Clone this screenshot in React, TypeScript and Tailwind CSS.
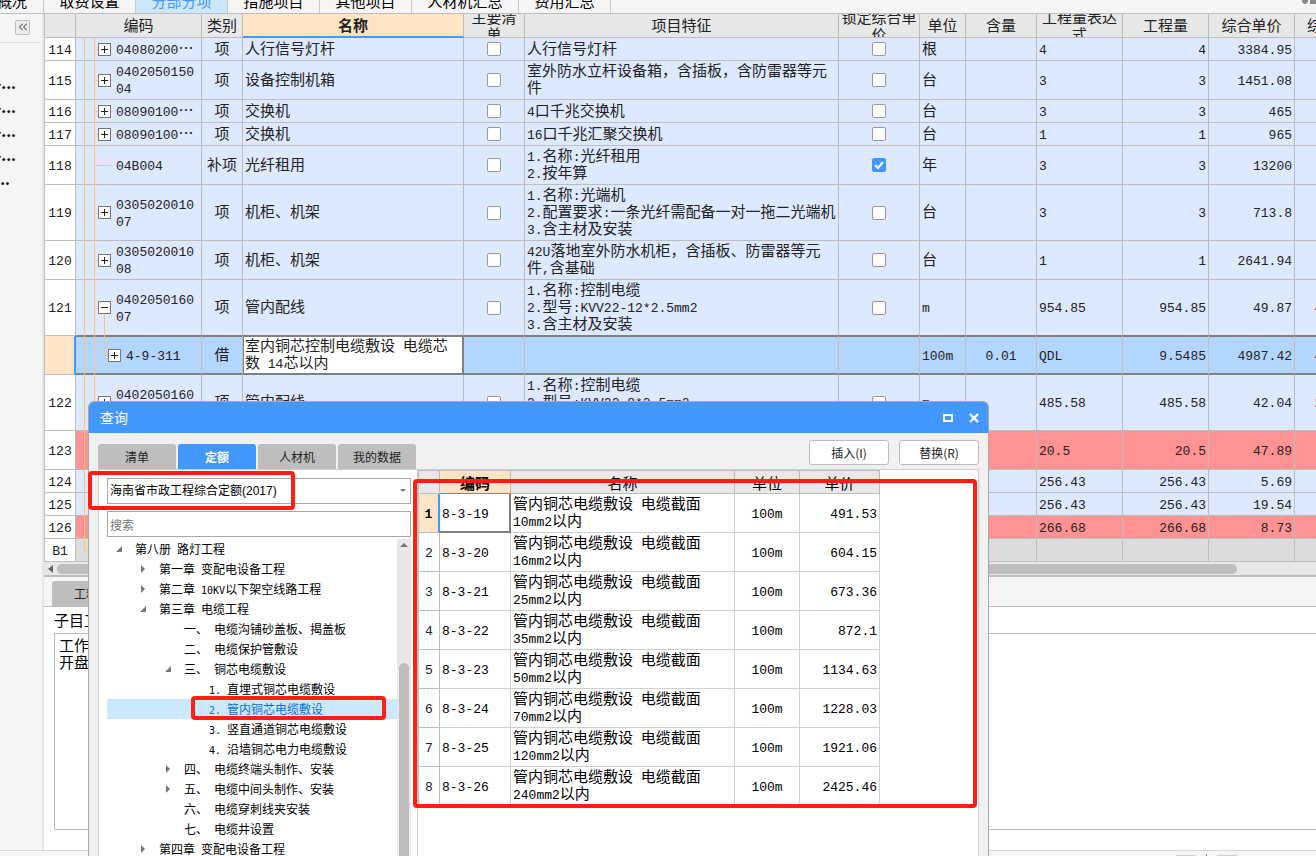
import { Fragment, type ReactNode } from 'react';
import clsx from 'clsx';
import { ChevronsLeft } from 'lucide-react';

type Tone = 'normal' | 'selected' | 'alert' | 'total';

interface Item {
  no: string;
  code?: string;
  tree?: 'plus' | 'minus' | 'leaf' | 'child' | 'trunk' | 'end';
  kind?: string;
  name?: string;
  feature?: string;
  main?: boolean;
  locked?: boolean;
  unit?: string;
  content?: string;
  expr?: string;
  amount?: string;
  price?: string;
  total?: string;
  lines: 1 | 2 | 3;
  tone?: Tone;
}

const items: Item[] = [
  { no: '114', code: '04080200…', tree: 'plus', kind: '项', name: '人行信号灯杆', feature: '人行信号灯杆', main: false, locked: false, unit: '根', expr: '4', amount: '4', price: '3384.95', lines: 1 },
  { no: '115', code: '0402050150\n04', tree: 'plus', kind: '项', name: '设备控制机箱', feature: '室外防水立杆设备箱，含插板，含防雷器等元\n件', main: false, locked: false, unit: '台', expr: '3', amount: '3', price: '1451.08', lines: 2 },
  { no: '116', code: '08090100…', tree: 'plus', kind: '项', name: '交换机', feature: '4口千兆交换机', main: false, locked: false, unit: '台', expr: '3', amount: '3', price: '465', lines: 1 },
  { no: '117', code: '08090100…', tree: 'plus', kind: '项', name: '交换机', feature: '16口千兆汇聚交换机', main: false, locked: false, unit: '台', expr: '1', amount: '1', price: '965', lines: 1 },
  { no: '118', code: '04B004', tree: 'leaf', kind: '补项', name: '光纤租用', feature: '1.名称:光纤租用\n2.按年算', main: false, locked: true, unit: '年', expr: '3', amount: '3', price: '13200', lines: 2 },
  { no: '119', code: '0305020010\n07', tree: 'plus', kind: '项', name: '机柜、机架', feature: '1.名称:光端机\n2.配置要求:一条光纤需配备一对一拖二光端机\n3.含主材及安装', main: false, locked: false, unit: '台', expr: '3', amount: '3', price: '713.8', lines: 3 },
  { no: '120', code: '0305020010\n08', tree: 'plus', kind: '项', name: '机柜、机架', feature: '42U落地室外防水机柜，含插板、防雷器等元\n件,含基础', main: false, locked: false, unit: '台', expr: '1', amount: '1', price: '2641.94', lines: 2 },
  { no: '121', code: '0402050160\n07', tree: 'minus', kind: '项', name: '管内配线', feature: '1.名称:控制电缆\n2.型号:KVV22-12*2.5mm2\n3.含主材及安装', main: false, locked: false, unit: 'm', expr: '954.85', amount: '954.85', price: '49.87', total: '47618.37', lines: 3 },
  { no: '', code: '4-9-311', tree: 'child', kind: '借', name: '室内铜芯控制电缆敷设 电缆芯\n数 14芯以内', unit: '100m', content: '0.01', expr: 'QDL', amount: '9.5485', price: '4987.42', total: '47622.38', lines: 2, tone: 'selected' },
  { no: '122', code: '0402050160\n08', tree: 'plus', kind: '项', name: '管内配线', feature: '1.名称:控制电缆\n2.型号:KVV22-8*2.5mm2\n3.含主材及安装', main: false, locked: false, unit: 'm', expr: '485.58', amount: '485.58', price: '42.04', total: '20413.78', lines: 3 },
  { no: '123', tree: 'trunk', expr: '20.5', amount: '20.5', price: '47.89', lines: 2, tone: 'alert' },
  { no: '124', tree: 'trunk', expr: '256.43', amount: '256.43', price: '5.69', lines: 1 },
  { no: '125', tree: 'trunk', expr: '256.43', amount: '256.43', price: '19.54', lines: 1 },
  { no: '126', tree: 'trunk', expr: '266.68', amount: '266.68', price: '8.73', lines: 1, tone: 'alert' },
  { no: 'B1', tree: 'end', lines: 1, tone: 'total' },
];

const quotas = [
  { code: '8-3-19', size: '10', price: '491.53' },
  { code: '8-3-20', size: '16', price: '604.15' },
  { code: '8-3-21', size: '25', price: '673.36' },
  { code: '8-3-22', size: '35', price: '872.1' },
  { code: '8-3-23', size: '50', price: '1134.63' },
  { code: '8-3-24', size: '70', price: '1228.03' },
  { code: '8-3-25', size: '120', price: '1921.06' },
  { code: '8-3-26', size: '240', price: '2425.46' },
];

interface Node {
  label: string;
  level: 0 | 1 | 2 | 3;
  state?: 'open' | 'closed';
  active?: boolean;
}

const nodes: Node[] = [
  { label: '第八册 路灯工程', level: 0, state: 'open' },
  { label: '第一章 变配电设备工程', level: 1, state: 'closed' },
  { label: '第二章 10KV以下架空线路工程', level: 1, state: 'closed' },
  { label: '第三章 电缆工程', level: 1, state: 'open' },
  { label: '一、 电缆沟铺砂盖板、揭盖板', level: 2 },
  { label: '二、 电缆保护管敷设', level: 2 },
  { label: '三、 铜芯电缆敷设', level: 2, state: 'open' },
  { label: '1. 直埋式铜芯电缆敷设', level: 3 },
  { label: '2. 管内铜芯电缆敷设', level: 3, active: true },
  { label: '3. 竖直通道铜芯电缆敷设', level: 3 },
  { label: '4. 沿墙铜芯电力电缆敷设', level: 3 },
  { label: '四、 电缆终端头制作、安装', level: 2, state: 'closed' },
  { label: '五、 电缆中间头制作、安装', level: 2, state: 'closed' },
  { label: '六、 电缆穿刺线夹安装', level: 2 },
  { label: '七、 电缆井设置', level: 2 },
  { label: '第四章 变配电设备工程', level: 1, state: 'closed' },
];

const indent = ['pl-2', 'pl-8', 'pl-[57px]', 'pl-[82px]'];

const rowHeight = { 1: 'h-[23px]', 2: 'h-[39px]', 3: 'h-[56px]' };

const toneBg: Record<Tone, string> = {
  normal: 'bg-[#dde9ff]',
  selected: 'bg-[#b3d6ff]',
  alert: 'bg-[#ff9292]',
  total: 'bg-[#dcdcdc]',
};

// Latin runs are set in a half-width mono face next to full-width hanzi.
// Their short line height keeps them from growing the line box.
function Mixed({ text, small }: { text?: string; small?: boolean }) {
  if (!text) return null;
  return (
    <>
      {text.split(/([\x20-\x7e]+)/).map((part, i) =>
        i % 2 === 1 ? (
          <span
            key={i}
            className={clsx(
              'leading-[10px] whitespace-pre',
              small ? "font-['DejaVu_Sans_Mono',monospace] text-[10px]" : "font-['Liberation_Mono',monospace] text-[13px]",
            )}
          >
            {part}
          </span>
        ) : (
          <Fragment key={i}>{part}</Fragment>
        ),
      )}
    </>
  );
}

function TreeMark({ tree }: { tree: NonNullable<Item['tree']> }) {
  const line = 'absolute bg-[#ffc56e]';
  const inner = tree !== 'trunk' && tree !== 'end';
  return (
    <>
      <span className={clsx(line, 'left-2 top-0 w-px', tree === 'end' ? 'h-1/2' : '-bottom-px')} />
      {tree === 'end' && <span className={clsx(line, 'left-2 top-1/2 h-px w-4')} />}
      {inner && <span className={clsx(line, 'left-[18px] top-0 -bottom-px w-px')} />}
      {inner && tree !== 'child' && (
        <span className={clsx(line, 'left-[18px] top-1/2 h-px', tree === 'leaf' ? 'w-[17px]' : 'w-1')} />
      )}
      {tree === 'minus' && <span className={clsx(line, 'left-7 top-1/2 -bottom-px w-px')} />}
      {tree === 'child' && <span className={clsx(line, 'left-7 top-0 h-1/2 w-px')} />}
      {tree === 'child' && <span className={clsx(line, 'left-7 top-1/2 h-px w-1')} />}
    </>
  );
}

function Toggle({ open }: { open: boolean }) {
  return (
    <button type="button" aria-label={open ? '折叠' : '展开'} className="relative block size-[13px] shrink-0 border border-[#777] bg-white">
      <svg viewBox="0 0 11 11" className="block size-[11px]" shapeRendering="crispEdges">
        <path d={open ? 'M2 5h7v1h-7z' : 'M2 5h7v1h-7z M5 2h1v7h-1z'} fill="#222" />
      </svg>
    </button>
  );
}

function CheckBox({ label, checked }: { label: string; checked: boolean }) {
  return (
    <label className="relative mx-auto block size-[14px]">
      <input
        type="checkbox"
        aria-label={label}
        defaultChecked={checked}
        className="block size-[14px] appearance-none rounded-[2px] border border-[#999] bg-white checked:border-[#4298ff] checked:bg-[#4298ff]"
      />
      {checked && (
        <svg viewBox="0 0 14 14" className="pointer-events-none absolute inset-0 size-[14px]">
          <path d="M3 7l3 3 5-6" fill="none" stroke="#fff" strokeWidth="2" />
        </svg>
      )}
    </label>
  );
}

function HeadCell({ children }: { children?: ReactNode }) {
  return (
    <th className="h-6 border-r border-b border-[#bdbdbd] bg-[#e8e8e8] p-0 font-normal">
      <div className="flex h-[23px] items-center justify-center overflow-hidden pb-0.5 whitespace-nowrap">{children}</div>
    </th>
  );
}

function ItemRow({ item, beforeSelected }: { item: Item; beforeSelected: boolean }) {
  const tone = item.tone ?? 'normal';
  const selected = tone === 'selected';
  const base = clsx(
    'relative border-r border-b border-r-[#bdbdbd] whitespace-pre-line',
    selected || beforeSelected ? 'border-b-[#808080]' : 'border-b-[#bdbdbd]',
    selected && 'shadow-[inset_0_1px_0_#808080,inset_0_-1px_0_#808080]',
    toneBg[tone],
  );
  const plain = clsx(base, 'p-0');
  const cell = clsx(base, 'px-0.5 pt-0 pb-1');
  return (
    <tr className={rowHeight[item.lines]}>
      <th
        className={clsx(
          'border-r border-b border-b-[#bdbdbd] px-0 pt-0 pb-1 text-center font-normal',
          selected ? 'border-r-2 border-r-[#4298ff] bg-[#ffe5c6]' : 'border-r-[#bdbdbd] bg-white',
        )}
      >
        <Mixed text={item.no} />
      </th>
      <td className={plain}>
        {item.tree && <TreeMark tree={item.tree} />}
        {item.code && (
          <div className={clsx('relative flex items-center gap-[5px]', selected ? 'pl-8' : 'pl-[22px]')}>
            {item.tree === 'leaf' ? <span className="w-[13px]" /> : <Toggle open={item.tree === 'minus'} />}
            <span className="pb-1">
              <Mixed text={item.code} />
            </span>
          </div>
        )}
      </td>
      <td className={clsx(cell, 'text-center')}>{item.kind}</td>
      <td
        className={clsx(
          'relative border-r border-b px-0.5 pt-0 pb-1 whitespace-pre-line',
          selected
            ? 'border-[#808080] bg-white shadow-[inset_1px_1px_0_#808080,inset_-1px_-1px_0_#808080]'
            : [beforeSelected ? 'border-b-[#808080]' : 'border-b-[#bdbdbd]', 'border-r-[#bdbdbd]', toneBg[tone]],
        )}
      >
        <Mixed text={item.name} />
      </td>
      <td className={plain}>
        {item.main !== undefined && <CheckBox label={`主要清单 ${item.no}`} checked={item.main} />}
      </td>
      <td className={cell}>
        <Mixed text={item.feature} />
      </td>
      <td className={plain}>
        {item.locked !== undefined && <CheckBox label={`锁定综合单价 ${item.no}`} checked={item.locked} />}
      </td>
      <td className={cell}>
        <Mixed text={item.unit} />
      </td>
      <td className={clsx(cell, 'text-center')}>
        <Mixed text={item.content} />
      </td>
      <td className={cell}>
        <Mixed text={item.expr} />
      </td>
      <td className={clsx(cell, 'text-right')}>
        <Mixed text={item.amount} />
      </td>
      <td className={clsx(cell, 'text-right')}>
        <Mixed text={item.price} />
      </td>
      <td className={clsx(cell, 'text-right')}>
        <Mixed text={item.total} />
      </td>
    </tr>
  );
}

function ItemTable() {
  return (
    <table className="w-[1336px] table-fixed border-separate border-spacing-0 border-l border-[#bdbdbd] text-[15px] leading-[17px] text-[#222]">
      <colgroup>
        <col className="w-[31px]" />
        <col className="w-[126px]" />
        <col className="w-[41px]" />
        <col className="w-[221px]" />
        <col className="w-[61px]" />
        <col className="w-[314px]" />
        <col className="w-[81px]" />
        <col className="w-[46px]" />
        <col className="w-[71px]" />
        <col className="w-[86px]" />
        <col className="w-[86px]" />
        <col className="w-[86px]" />
        <col />
      </colgroup>
      <thead>
        <tr>
          <HeadCell />
          <HeadCell>编码</HeadCell>
          <HeadCell>类别</HeadCell>
          <th className="h-6 border-r border-b-2 border-r-[#bdbdbd] border-b-[#4298ff] bg-[#ffe5c6] px-0 pt-0 pb-0.5 font-bold">名称</th>
          <HeadCell>
            <span>
              主要清
              <br />单
            </span>
          </HeadCell>
          <HeadCell>项目特征</HeadCell>
          <HeadCell>
            <span>
              锁定综合单
              <br />价
            </span>
          </HeadCell>
          <HeadCell>单位</HeadCell>
          <HeadCell>含量</HeadCell>
          <HeadCell>
            <span>
              工程量表达
              <br />式
            </span>
          </HeadCell>
          <HeadCell>工程量</HeadCell>
          <HeadCell>综合单价</HeadCell>
          <HeadCell>综合合价</HeadCell>
        </tr>
      </thead>
      <tbody>
        {items.map((item, i) => (
          <ItemRow key={i} item={item} beforeSelected={items[i + 1]?.tone === 'selected'} />
        ))}
      </tbody>
    </table>
  );
}

function TopTabs() {
  const tabs = ['取费设置', '分部分项', '措施项目', '其他项目', '人材机汇总', '费用汇总'];
  return (
    <nav className="flex h-[14px] shrink-0 items-end overflow-hidden border-b border-[#bdbdbd] text-[15px] leading-5 text-black">
      <button type="button" className="flex h-[22px] w-11 justify-end border-r border-[#c8c8c8] pr-4 whitespace-nowrap">概况</button>
      {tabs.map((tab) => (
        <button
          key={tab}
          type="button"
          className={clsx(
            'flex h-[22px] justify-center border-r border-[#c8c8c8] whitespace-nowrap',
            tab.length === 5 ? 'w-[107px]' : 'w-[92px]',
            tab === '分部分项' && 'bg-[#cce8ff] text-[#4298ff]',
          )}
        >
          {tab}
        </button>
      ))}
      <svg viewBox="0 0 14 13" className="ml-auto h-[13px] w-[14px]">
        <path d="M0 0h6v2l-2 2h-2l-2-2z M8 0h6v4h-6z" fill="#8c8c8c" />
      </svg>
    </nav>
  );
}

function SideBar() {
  return (
    <aside className="w-11 shrink-0 border-r-2 border-[#e6e6e6] bg-[#f5f5f5]">
      <div className="mr-0.5 flex h-[29px] items-center justify-end border-b border-[#dcdcdc] pr-2.5 pb-0.5">
        <button type="button" aria-label="收起" className="flex size-[15px] items-center justify-center rounded-[2px] border border-[#bbb] bg-[#ececec]">
          <ChevronsLeft className="size-3.5 shrink-0 text-[#777]" strokeWidth={2} />
        </button>
      </div>
      <ul className="w-4 pt-7 text-[15px] leading-6 font-bold text-black">
        {[0, 1, 2, 3].map((n) => (
          <li key={n} className="flex justify-end overflow-hidden">-...</li>
        ))}
        <li className="flex justify-end overflow-hidden pr-1.5">..</li>
      </ul>
    </aside>
  );
}

function QuotaTable() {
  const head = 'h-[23px] border-r border-b border-[#bdbdbd] bg-[#e8e8e8] p-0 font-normal';
  const cell = 'border-r border-b border-[#d0d0d0] px-0.5 pt-0 pb-1';
  return (
    <table className="w-[462px] table-fixed border-separate border-spacing-0 border-t border-l border-[#bdbdbd] text-[15px] leading-[17px] text-black">
      <colgroup>
        <col className="w-[21px]" />
        <col className="w-[71px]" />
        <col className="w-[224px]" />
        <col className="w-[65px]" />
        <col className="w-20" />
      </colgroup>
      <thead>
        <tr>
          <th className={head} />
          <th className="h-[23px] border-r border-b border-r-[#bdbdbd] border-b-[#4298ff] bg-[#ffe5c6] p-0 font-bold">编码</th>
          <th className={head}>名称</th>
          <th className={head}>单位</th>
          <th className={head}>单价</th>
        </tr>
      </thead>
      <tbody>
        {quotas.map((quota, i) => (
          <tr key={quota.code} className="h-[39px]">
            <th
              className={clsx(
                'border-r border-b border-[#bdbdbd] px-0 pt-0 pb-1 text-center',
                i === 0 ? 'border-r-2 border-r-[#4298ff] bg-[#ffe5c6] font-bold' : 'font-normal text-[#222]',
              )}
            >
              <Mixed text={String(i + 1)} />
            </th>
            <td className={clsx('border-r border-b px-0.5 pt-0 pb-1', i === 0 ? 'border-[#808080] shadow-[inset_-1px_-1px_0_#808080]' : 'border-[#d0d0d0]')}>
              <Mixed text={quota.code} />
            </td>
            <td className={cell}>
              <Mixed text="管内铜芯电缆敷设 电缆截面" />
              <br />
              <Mixed text={`${quota.size}mm2以内`} />
            </td>
            <td className={clsx(cell, 'text-center')}>
              <Mixed text="100m" />
            </td>
            <td className={clsx(cell, 'text-right')}>
              <Mixed text={quota.price} />
            </td>
          </tr>
        ))}
      </tbody>
    </table>
  );
}

function QuotaTree() {
  return (
    <div className="mt-0.5 flex min-h-0 flex-1">
      <ul className="min-w-0 flex-1 text-xs leading-5">
        {nodes.map((node) => (
          <li key={node.label} className={clsx('flex h-5 items-center', indent[node.level], node.active && 'bg-[#cce8ff] text-[#0a6ddc]')}>
            <span className="flex w-5 shrink-0 items-center">
              {node.state && (
                <svg viewBox="0 0 8 8" className="size-2" aria-hidden="true">
                  <path d={node.state === 'open' ? 'M7 1v6h-6z' : 'M2 0l4 4-4 4z'} fill="#777" />
                </svg>
              )}
            </span>
            <button type="button" className="whitespace-nowrap">
              <Mixed text={node.label} small />
            </button>
          </li>
        ))}
      </ul>
      <div className="flex w-[14px] flex-col items-center bg-[#e8e8e8] pt-1">
        <svg viewBox="0 0 8 4" className="h-1 w-2">
          <path d="M4 0l4 4h-8z" fill="#777" />
        </svg>
        <div className="mt-[116px] w-2.5 flex-1 rounded-t-full bg-[#bebebe]" />
      </div>
    </div>
  );
}

function QueryWindow() {
  const tabs = ['清单', '定额', '人材机', '我的数据'];
  return (
    <section
      aria-label="查询"
      className="absolute top-[401px] bottom-0 left-[88px] flex w-[901px] flex-col overflow-hidden rounded-t-md border border-b-0 border-[#a8a8a8] bg-[#f1f1f1]"
    >
      <header className="flex h-[31px] shrink-0 items-center bg-[#4298ff] px-[11px] text-[14px] text-white">
        <h2 className="flex-1">查询</h2>
        <button type="button" aria-label="最大化" className="mr-4">
          <svg viewBox="0 0 10 8" className="h-2 w-2.5" shapeRendering="crispEdges">
            <path d="M1 1h8v6h-8z" fill="none" stroke="#fff" strokeWidth="2" />
          </svg>
        </button>
        <button type="button" aria-label="关闭" className="-mr-0.5">
          <svg viewBox="0 0 10 10" className="size-2.5">
            <path d="M1 1l8 8M9 1l-8 8" stroke="#fff" strokeWidth="2.4" />
          </svg>
        </button>
      </header>
      <div className="flex h-9 shrink-0 items-end px-[9px] text-xs">
        <div className="flex flex-1 gap-0.5">
          {tabs.map((tab) => (
            <button
              key={tab}
              type="button"
              className={clsx(
                'h-[25px] w-[78px] rounded-t-[3px]',
                tab === '定额' ? 'bg-[#4298ff] font-bold text-white' : 'bg-[#bebebe] text-[#222]',
              )}
            >
              {tab}
            </button>
          ))}
        </div>
        <div className="mb-1 flex gap-2.5">
          <button type="button" className="h-[25px] w-20 rounded-[3px] border border-[#bdbdbd] bg-white text-[#222]">插入(I)</button>
          <button type="button" className="h-[25px] w-20 rounded-[3px] border border-[#bdbdbd] bg-white text-[#222]">替换(R)</button>
        </div>
      </div>
      <div className="mx-[9px] flex min-h-0 flex-1 border border-b-0 border-[#d0d0d0] bg-white">
        <div className="flex w-[319px] shrink-0 flex-col border-r border-[#d0d0d0] pt-2 pr-1.5 pl-2">
          <label className="relative block">
            <select aria-label="定额库" className="block h-[26px] w-full appearance-none border border-[#a8a8a8] bg-white pl-0.5 font-['Liberation_Sans','Noto_Sans_CJK_SC',sans-serif] text-xs text-black">
              <option>海南省市政工程综合定额(2017)</option>
            </select>
            <svg viewBox="0 0 6 3" className="pointer-events-none absolute top-[11px] right-[5px] h-[3px] w-1.5">
              <path d="M0 0h6l-3 3z" fill="#777" />
            </svg>
          </label>
          <input
            type="text"
            aria-label="搜索"
            placeholder="搜索"
            className="mt-[7px] block h-[26px] w-full border border-[#a8a8a8] px-0.5 text-xs placeholder:text-[#777]"
          />
          <QuotaTree />
        </div>
        <div className="min-w-0 flex-1 overflow-hidden">
          <QuotaTable />
        </div>
      </div>
    </section>
  );
}

export default function App() {
  const mark = 'pointer-events-none absolute rounded-[4px] border-4 border-[#ff1f12]';
  return (
    <div className="relative flex h-screen w-full flex-col overflow-hidden bg-[#f5f5f5] font-['Noto_Sans_CJK_SC',sans-serif]">
      <TopTabs />
      <div className="flex min-h-0 flex-1">
        <SideBar />
        <main className="flex min-w-0 flex-1 flex-col bg-white">
          <div className="shrink-0 overflow-hidden">
            <ItemTable />
          </div>
          <div className="flex h-[15px] shrink-0 items-center border-b-2 border-[#bdbdbd] bg-[#e8e8e8] pl-1">
            <svg viewBox="0 0 5 8" className="h-2 w-[5px]">
              <path d="M5 0v8l-5-4z" fill="#666" />
            </svg>
            <div className="ml-1 h-2.5 w-[1180px] rounded-full bg-[#bebebe]" />
          </div>
          <div className="flex h-[30px] shrink-0 items-end border-b border-[#bdbdbd] bg-[#f5f5f5] pl-2">
            <button type="button" className="h-[25px] w-[104px] rounded-t-[3px] bg-[#bebebe] text-xs text-[#222]">工料机显示</button>
          </div>
          <div className="flex min-h-0 flex-1 flex-col pt-1 pb-5 pl-2.5 text-[15px] leading-[17px] text-black">
            <h3 className="h-[22px] leading-[18px]">子目工作内容</h3>
            <div className="flex-1 border border-r-0 border-[#bdbdbd] px-1 py-0.5">
              工作内容
              <br />
              开盘
            </div>
          </div>
        </main>
      </div>
      <footer className="flex h-1.5 shrink-0 items-end justify-end gap-2.5 border-t border-[#d6d6d6] bg-[#f5f5f5] pr-[79px]">
        <span className="h-px w-5 bg-[#d0d0d0]" />
        <span className="h-0.5 w-px bg-[#888]" />
        <span className="h-px w-5 bg-[#d0d0d0]" />
      </footer>
      <QueryWindow />
      <div className={clsx(mark, 'top-[471px] left-[88px] h-[39px] w-[207px]')} />
      <div className={clsx(mark, 'top-[479px] left-[413px] h-[329px] w-[564px]')} />
      <div className={clsx(mark, 'top-[696px] left-[191px] h-6 w-[195px]')} />
    </div>
  );
}
